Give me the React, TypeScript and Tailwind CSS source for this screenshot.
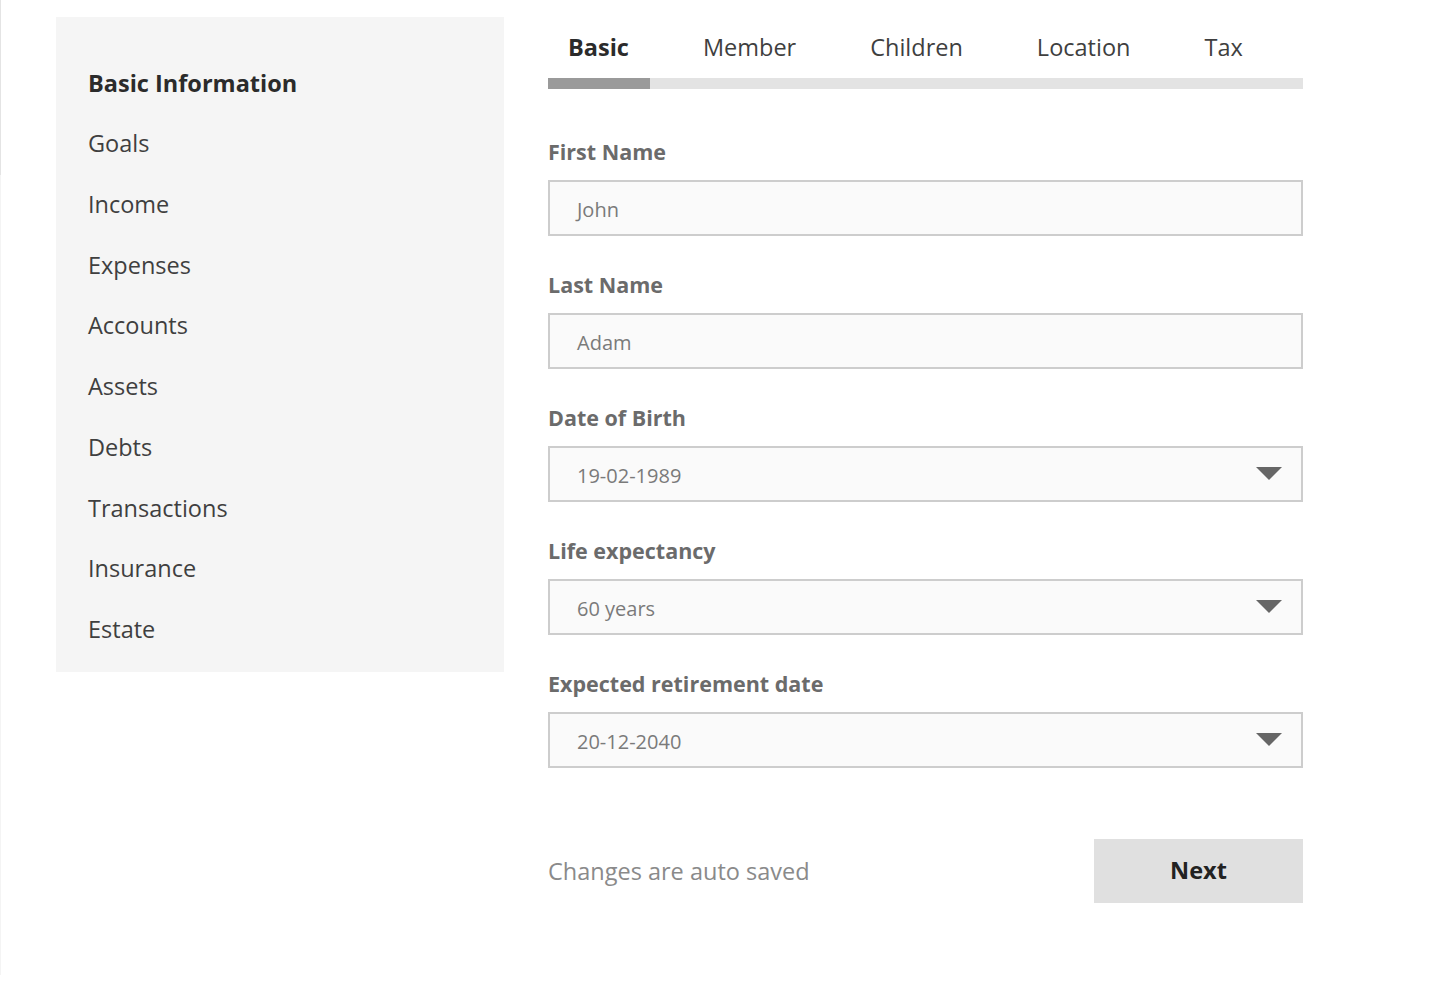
import { useState } from "react"

const sections = [
  "Basic Information",
  "Goals",
  "Income",
  "Expenses",
  "Accounts",
  "Assets",
  "Debts",
  "Transactions",
  "Insurance",
  "Estate",
]

const tabs = ["Basic", "Member", "Children", "Location", "Tax"]

const fields = [
  { label: "First Name", value: "John", select: false },
  { label: "Last Name", value: "Adam", select: false },
  { label: "Date of Birth", value: "19-02-1989", select: true },
  { label: "Life expectancy", value: "60 years", select: true },
  { label: "Expected retirement date", value: "20-12-2040", select: true },
]

function Caret() {
  return (
    <svg width="26" height="14" viewBox="0 0 26 14" className="shrink-0">
      <path d="M0 0 H26 L13 13 Z" fill="#666666" />
    </svg>
  )
}

export default function App() {
  const [active, setActive] = useState(0)
  const [tab, setTab] = useState(0)

  return (
    <div
      className="flex min-h-[1008px] w-[1440px] bg-white"
      style={{ fontFamily: "'Open Sans', 'Noto Sans', sans-serif" }}
    >
      {/* left edge line */}
      <div className="flex w-px flex-col">
        <div className="h-[175px] w-px bg-[#e4e4e4]" />
        <div className="h-[800px] w-px bg-[#f4f4f4]" />
      </div>

      {/* Sidebar */}
      <aside className="ml-[55px] mt-[17px] h-[655px] w-[448px] bg-[#f5f5f5] pt-[36px] pl-[32px]">
        {sections.map((s, i) => (
          <button
            key={s}
            onClick={() => setActive(i)}
            className={`flex h-[60.7px] items-center text-[23.5px] ${
              active === i ? "font-bold text-[#2b2b2b]" : "text-[#3f3f3f]"
            }`}
          >
            {s}
          </button>
        ))}
      </aside>

      {/* Form */}
      <main className="ml-[44px] w-[755px]">
        <div className="mt-[28px] flex h-[40px] items-center gap-[74px] pl-[20px]">
          {tabs.map((t, i) => (
            <button
              key={t}
              onClick={() => setTab(i)}
              className={`text-[23.5px] ${tab === i ? "font-bold text-[#2b2b2b]" : "text-[#3f3f3f]"}`}
            >
              {t}
            </button>
          ))}
        </div>
        <div className="mt-[10px] h-[11px] w-full bg-[#e3e3e3]">
          <div className="h-full w-[102px] bg-[#9a9a9a]" />
        </div>

        <div className="mt-[49px] flex flex-col gap-[35px]">
          {fields.map((f) => (
            <div key={f.label}>
              <div className="flex h-[28px] items-center text-[21.5px] font-bold text-[#6b6b6b]">
                {f.label}
              </div>
              <div className="mt-[14px] flex h-[56px] items-center justify-between border-2 border-[#cdcdcd] bg-[#fafafa] pl-[27px] pr-[19px] text-[20px] text-[#7a7a7a]">
                <span className="pt-[3px]">{f.value}</span>
                {f.select && <Caret />}
              </div>
            </div>
          ))}
        </div>

        <div className="mt-[71px] flex items-center justify-between">
          <span className="pt-[2px] text-[23.5px] text-[#8a8a8a]">Changes are auto saved</span>
          <button className="flex h-[64px] w-[209px] items-center justify-center bg-[#e0e0e0] text-[23.5px] font-bold text-[#222222]">
            Next
          </button>
        </div>
      </main>
    </div>
  )
}
